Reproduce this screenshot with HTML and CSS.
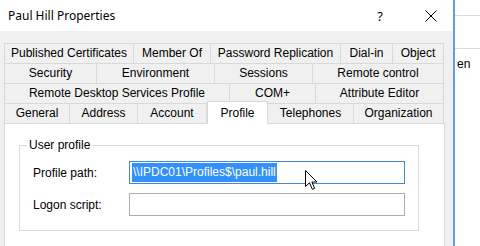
FILE: index.html
```html
<!DOCTYPE html>
<html lang="en">
<head>
  <meta charset="UTF-8" />
  <title>Paul Hill Properties</title>
  <link rel="stylesheet" href="styles.css">
</head>
<body>
  <div class="screen">
    <div class="dialog">
      <div class="titlebar">
        <span class="title">Paul Hill Properties</span>
        <span class="caption-btn help">?</span>
        <span class="caption-btn close">
          <svg width="12" height="12" viewBox="0 0 12 12">
            <path d="M0.5 0.5 L11.5 11.5 M11.5 0.5 L0.5 11.5" stroke="#000" stroke-width="1" fill="none" />
          </svg>
        </span>
      </div>

      <div class="dialog-body">
        <div class="tabs">
          <div class="tab-row row-1">
            <div class="tab">Published Certificates</div>
            <div class="tab">Member Of</div>
            <div class="tab">Password Replication</div>
            <div class="tab">Dial-in</div>
            <div class="tab">Object</div>
          </div>
          <div class="tab-row row-2">
            <div class="tab">Security</div>
            <div class="tab">Environment</div>
            <div class="tab">Sessions</div>
            <div class="tab">Remote control</div>
          </div>
          <div class="tab-row row-3">
            <div class="tab">Remote Desktop Services Profile</div>
            <div class="tab">COM+</div>
            <div class="tab">Attribute Editor</div>
          </div>
          <div class="tab-row row-4">
            <div class="tab">General</div>
            <div class="tab">Address</div>
            <div class="tab">Account</div>
            <div class="tab active">Profile</div>
            <div class="tab">Telephones</div>
            <div class="tab">Organization</div>
          </div>
        </div>

        <div class="panel">
          <fieldset class="group">
            <legend>User profile</legend>
            <div class="field">
              <label>Profile path:</label>
              <div class="textbox focused"><span class="selection">\\IPDC01\Profiles$\paul.hill</span></div>
            </div>
            <div class="field">
              <label>Logon script:</label>
              <div class="textbox"></div>
            </div>
          </fieldset>

          <svg class="cursor" width="13" height="21" viewBox="0 0 13 21">
            <path d="M0.5 0.5 L0.5 16.5 L4.5 12.8 L7.3 19.3 L9.6 18.3 L6.9 12 L12 12 Z" fill="#fff" stroke="#000" stroke-width="1" stroke-linejoin="round" />
          </svg>
        </div>
      </div>
    </div>

    <div class="behind">
      <div class="behind-row"></div>
      <div class="behind-row text-row">en</div>
    </div>
  </div>
</body>
</html>
```

FILE: styles.css
```css
/* Windows dialog look */
body {
  margin: 0;
  font-family: 'Liberation Sans', Arial, sans-serif;
  font-size: 12px;
  color: #000;
  background: #fff;
}

.screen {
  display: flex;
  width: 480px;
  height: 246px;
  overflow: hidden;
}

.dialog {
  flex: none;
  width: 453px;
  background: #f0f0f0;
  border-right: 2px solid #5d9fdf;
}

/* Title bar */
.titlebar {
  display: flex;
  align-items: center;
  height: 31px;
  background: #fff;
}

.title {
  flex: 1;
  margin-left: 8px;
  font-family: 'Noto Sans', sans-serif;
  font-size: 12px;
}

.caption-btn {
  display: flex;
  align-items: center;
  justify-content: center;
  height: 31px;
}

.help {
  width: 46px;
  margin-right: 5px;
  font-family: 'Noto Sans', sans-serif;
  font-size: 13px;
}

.close {
  width: 45px;
}

/* Tabs */
.dialog-body {
  padding: 12px 0 0 4px;
}

.tabs {
  width: 440px;
}

.tab-row {
  display: grid;
  grid-template-rows: 20px;
  align-items: start;
}

.row-1 { grid-template-columns: 130px 77px 130px 52px 1fr; }
.row-2 { grid-template-columns: 93px 118px 98px 1fr; }
.row-3 { grid-template-columns: 226px 86px 1fr; }
.row-4 { grid-template-columns: 66px 68px 69px 61px 86px 1fr; }

.tab {
  box-sizing: border-box;
  height: 20px;
  line-height: 19px;
  text-align: center;
  white-space: nowrap;
  border-top: 1px solid #d9d9d9;
  border-right: 1px solid #d9d9d9;
  background: #f0f0f0;
}

.tab:first-child {
  border-left: 1px solid #d9d9d9;
}

.tab.active {
  position: relative;
  z-index: 1;
  height: 23px;
  margin-top: -2px;
  line-height: 22px;
  background: #fff;
  border-left: 1px solid #d9d9d9;
}

/* Page content */
.panel {
  position: relative;
  box-sizing: border-box;
  width: 441px;
  height: 140px;
  background: #fff;
  border: 1px solid #d9d9d9;
}

.group {
  box-sizing: border-box;
  width: 400px;
  margin: 14px 0 0 14px;
  padding: 9px 13px 14px 13px;
  border: 1px solid #dcdcdc;
  min-width: 0;
}

.group legend {
  margin-left: -6px;
  padding: 0 2px;
  line-height: 14px;
}

.field {
  display: flex;
  align-items: center;
  margin-top: 9px;
}

.field:first-of-type {
  margin-top: 0;
}

.field label {
  width: 96px;
}

.textbox {
  box-sizing: border-box;
  width: 276px;
  height: 23px;
  padding: 1px 2px;
  background: #fff;
  border: 1px solid #adadad;
}

.textbox.focused {
  border-color: #3e8ad8;
}

.selection {
  display: inline-block;
  line-height: 19px;
  padding: 0 1px;
  background: #3390ff;
  color: #fff;
}

.cursor {
  position: absolute;
  left: 300px;
  top: 46px;
}

/* Window behind the dialog */
.behind {
  flex: 1;
  background: #fff;
  padding-top: 15px;
}

.behind-row {
  height: 32px;
  border-top: 1px solid #dcdcdc;
}

.text-row {
  padding-left: 2px;
  line-height: 30px;
  white-space: nowrap;
}
```
